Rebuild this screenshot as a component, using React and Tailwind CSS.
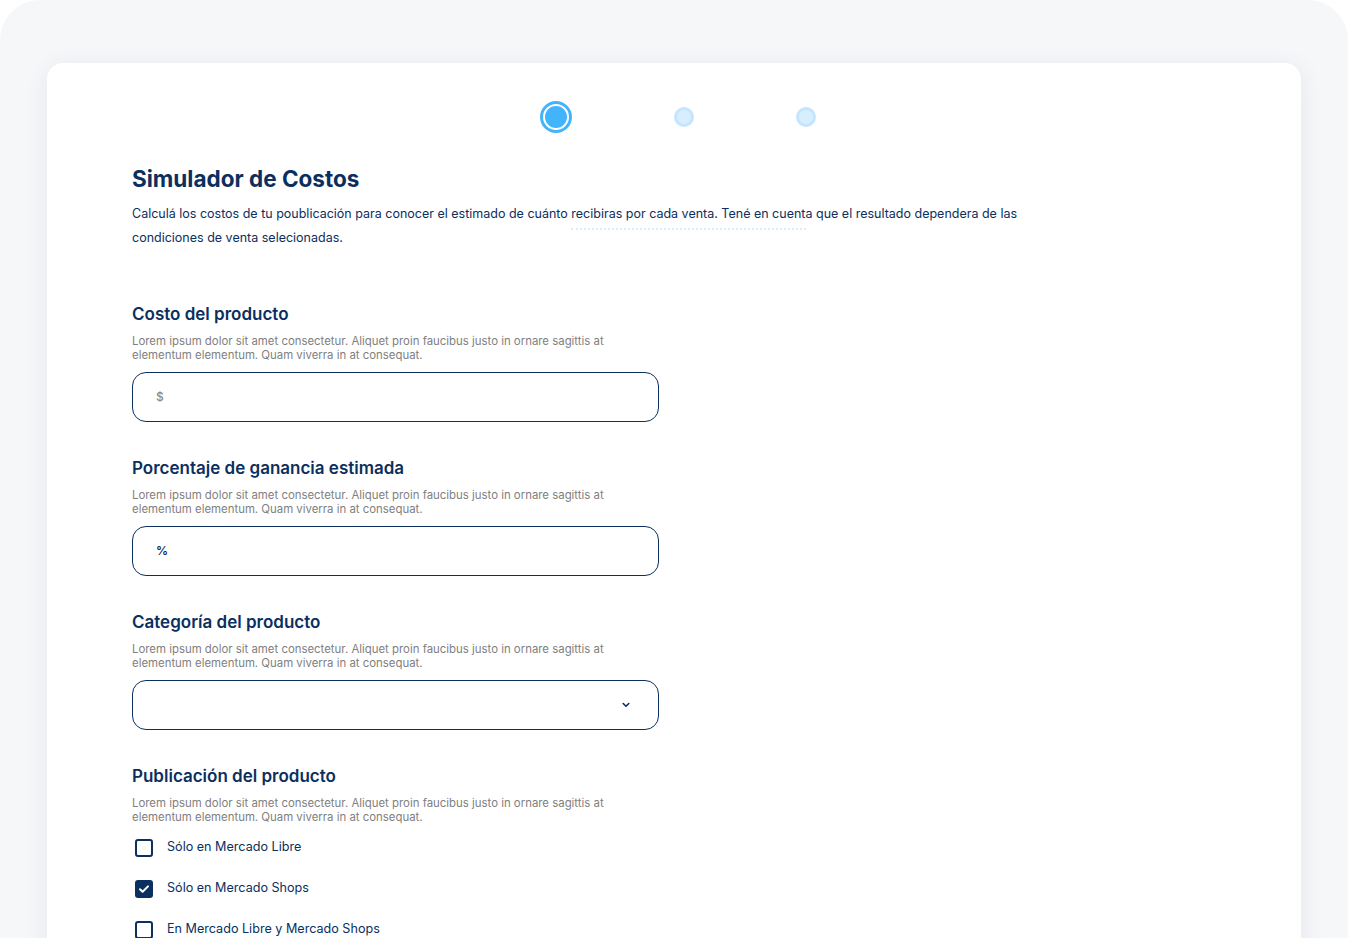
import React, { useState } from 'react';

const lorem =
  'Lorem ipsum dolor sit amet consectetur. Aliquet proin faucibus justo in ornare sagittis at elementum elementum. Quam viverra in at consequat.';

function Field({ title, children }) {
  return (
    <div className="w-[527px]">
      <h3 className="text-[17px] font-semibold leading-[22px] text-[#0b2f5e]">{title}</h3>
      <p className="mt-[9px] text-[11.4px] leading-[14px] text-[#808080] w-[490px]">{lorem}</p>
      {children}
    </div>
  );
}

function Check({ label, checked, onToggle }) {
  return (
    <label className="flex items-center gap-[14px] h-[41px] cursor-pointer" onClick={onToggle}>
      <span
        className={
          'ml-[3px] w-[18px] h-[18px] rounded-[3px] border-2 border-[#0b2f5e] flex items-center justify-center ' +
          (checked ? 'bg-[#0b2f5e]' : 'bg-white')
        }
      >
        {checked && (
          <svg width="12" height="12" viewBox="0 0 12 12" fill="none">
            <path d="M2 6.2l2.6 2.6L10 3.4" stroke="white" strokeWidth="2" strokeLinecap="round" strokeLinejoin="round" />
          </svg>
        )}
      </span>
      <span className="text-[12.6px] text-[#0b2f5e]">{label}</span>
    </label>
  );
}

export default function App() {
  const [pub, setPub] = useState(1);
  const options = ['Sólo en Mercado Libre', 'Sólo en Mercado Shops', 'En Mercado Libre y Mercado Shops'];

  return (
    <div className="h-[938px] overflow-hidden bg-white" style={{ fontFamily: 'Inter, "Noto Sans", sans-serif' }}>
      <div className="h-[1000px] rounded-[40px] bg-[#f6f7f9] pt-[63px] px-[47px]">
        <div className="relative h-[900px] rounded-[16px] bg-white shadow-[0_4px_24px_rgba(20,40,80,0.08)] pl-[85px] pt-[38px]">
          {/* stepper */}
          <div className="flex items-center h-[32px]">
            <div className="ml-[408px] w-[32px] h-[32px] rounded-full border-[3px] border-[#42b4fc] flex items-center justify-center">
              <div className="w-[22px] h-[22px] rounded-full bg-[#42b4fc]" />
            </div>
            <div className="ml-[102px] w-[20px] h-[20px] rounded-full bg-[#d7eefe] border-[3px] border-[#c4e5fd]" />
            <div className="ml-[102px] w-[20px] h-[20px] rounded-full bg-[#d7eefe] border-[3px] border-[#c4e5fd]" />
          </div>
          <div className="absolute left-[524px] top-[165px] w-[235px] border-t-2 border-dotted border-[#d9eefc]" />

          <h1 className="mt-[31px] text-[22.5px] font-bold leading-[30px] text-[#0b2f5e]">Simulador de Costos</h1>
          <p className="mt-[8px] w-[900px] text-[12.5px] leading-[24px] text-[#0b2f5e]">
            Calculá los costos de tu poublicación para conocer el estimado de cuánto recibiras por cada venta. Tené en cuenta que el resultado dependera de las condiciones de venta selecionadas.
          </p>

          <div className="mt-[53px] flex flex-col gap-[35px]">
            <Field title="Costo del producto">
              <div className="mt-[10px] h-[50px] rounded-[14px] border border-[#0b2f5e] flex items-center px-[23px]">
                <span className="text-[12px] font-medium text-[#8a8a8a]">$</span>
              </div>
            </Field>
            <Field title="Porcentaje de ganancia estimada">
              <div className="mt-[10px] h-[50px] rounded-[14px] border border-[#0b2f5e] flex items-center px-[23px]">
                <span className="text-[12px] font-semibold text-[#0b2f5e]">%</span>
              </div>
            </Field>
            <Field title="Categoría del producto">
              <div className="mt-[10px] h-[50px] rounded-[14px] border border-[#0b2f5e] flex items-center justify-end pr-[28px]">
                <svg width="8" height="6" viewBox="0 0 8 6" fill="none">
                  <path d="M1.2 1.5L4 4.3l2.8-2.8" stroke="#0b2f5e" strokeWidth="1.6" strokeLinecap="round" strokeLinejoin="round" />
                </svg>
              </div>
            </Field>
            <Field title="Publicación del producto">
              <div className="mt-[3px] flex flex-col">
                {options.map((o, i) => (
                  <Check key={o} label={o} checked={pub === i} onToggle={() => setPub(i)} />
                ))}
              </div>
            </Field>
          </div>
        </div>
      </div>
    </div>
  );
}
